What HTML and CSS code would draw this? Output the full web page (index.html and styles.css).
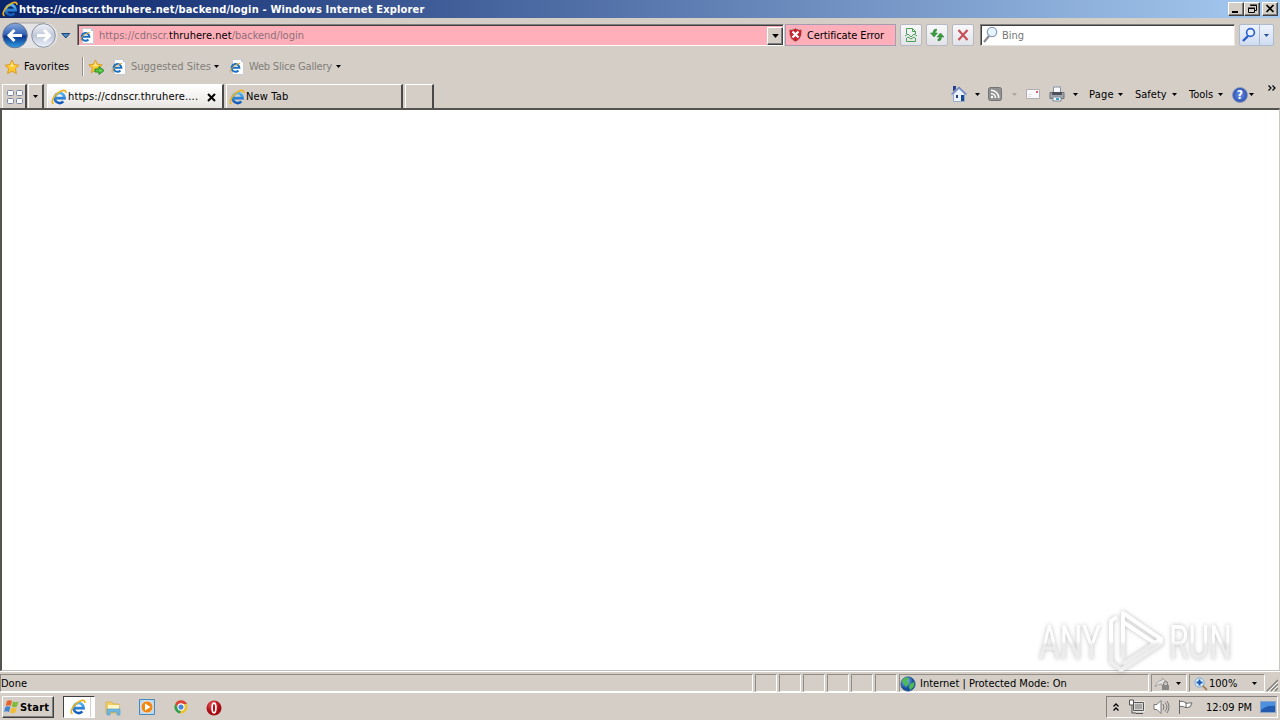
FILE: index.html
```html
<!DOCTYPE html>
<html lang="en">
<head>
    <meta charset="UTF-8">
    <meta name="viewport" content="width=device-width, initial-scale=1.0">
    <title>Windows Internet Explorer</title>
    <link rel="stylesheet" href="styles.css">
</head>
<body>
    <!-- shared icons -->
    <svg class="defs" width="0" height="0">
        <defs>
            <linearGradient id="blue" x1="0" y1="0" x2="0" y2="1"><stop offset="0" stop-color="#58b8f2"/><stop offset="1" stop-color="#1259b8"/></linearGradient>
            <linearGradient id="back" x1="0" y1="0" x2="0" y2="1"><stop offset="0" stop-color="#86a9de"/><stop offset=".48" stop-color="#2d5db2"/><stop offset=".52" stop-color="#0c3289"/><stop offset="1" stop-color="#2fa0e8"/></linearGradient>
            <linearGradient id="fwd" x1="0" y1="0" x2="0" y2="1"><stop offset="0" stop-color="#f0f2f8"/><stop offset=".5" stop-color="#bfc7d8"/><stop offset="1" stop-color="#edf3fb"/></linearGradient>
            <radialGradient id="globe" cx=".35" cy=".3"><stop offset="0" stop-color="#8fd0f8"/><stop offset="1" stop-color="#164c9c"/></radialGradient>
            <radialGradient id="opera" cx=".4" cy=".3"><stop offset="0" stop-color="#f05858"/><stop offset="1" stop-color="#a80a14"/></radialGradient>
        </defs>
        <symbol id="ie" viewBox="0 0 16 16">
            <path d="M4 9.200h9.600A5 5 0 1 0 12.300 12.400" fill="none" stroke="url(#blue)" stroke-width="2.700"/>
            <path d="M4.500 9.200H14" stroke="#2a80d4" stroke-width="1.800"/>
            <path d="M2.600 14.800C-.6 13.800 2 8 6.500 4.300 10.500 1.100 15.400 -.2 14.900 4" fill="none" stroke="#eeb21c" stroke-width="1.600"/>
        </symbol>
        <symbol id="iepage" viewBox="0 0 16 16">
            <path d="M3.500.5h9l2 2v13h-11z" fill="#fff" stroke="#c9cbd0"/>
            <path d="M12.500.5v2h2" fill="#e3e6ea" stroke="#b9bcc4"/>
            <path d="M3 8.800h7.400a3.900 3.900 0 1 0-1 2.700" fill="none" stroke="#1b70c4" stroke-width="2"/>
            <path d="M1.500 13.500C0 12 4 6 11 4.300" fill="none" stroke="#e0a82c"/>
        </symbol>
        <symbol id="star" viewBox="0 0 16 16">
            <path d="M8 1l2.100 4.600 5 .6-3.700 3.400 1 5L8 12.100l-4.400 2.500 1-5L.9 6.200l5-.6z" fill="#fcc62f" stroke="#dc9a26"/>
            <path d="M8 3l1.200 3.400 2.800.4-4 1.200-4-1.200 2.800-.4z" fill="#ffe98c"/>
        </symbol>
        <symbol id="caret" viewBox="0 0 5 3"><path d="M0 0h5L2.500 3z"/></symbol>
    </svg>

    <div class="titlebar">
        <svg class="i16"><use href="#ie"/></svg>
        <span class="title">https://cdnscr.thruhere.net/backend/login - Windows Internet Explorer</span>
        <div class="window-buttons">
            <button class="win-btn"><svg width="11" height="10"><path d="M1 8h6" stroke="#000" stroke-width="2"/></svg></button>
            <button class="win-btn"><svg width="11" height="10" fill="none" stroke="#000"><path d="M3.500 1.500h6v5h-2M3 1h7M1.500 4.500h6v4h-6zM1 4h7"/></svg></button>
            <button class="win-btn close"><svg width="11" height="10"><path d="M1.500 1l7 7m0-7l-7 7" stroke="#000" stroke-width="1.700"/></svg></button>
        </div>
    </div>

    <div class="navbar">
        <svg class="travel" width="57" height="27" viewBox="0 0 57 27">
            <path d="M13 1h31a12 12 0 0 1 0 25H13z" fill="#e5e4e5"/>
            <path d="M13 1h31" stroke="#aaa6a8"/>
            <circle cx="14" cy="13.500" r="12.300" fill="url(#back)" stroke="#6b7694"/>
            <path d="M21 13.500H8m5.500-5.500L8 13.500l5.500 5.500" fill="none" stroke="#fff" stroke-width="3"/>
            <circle cx="42.500" cy="13.500" r="11.800" fill="url(#fwd)" stroke="#8c919e"/>
            <path d="M36 13.500h12m-5-5.500l5.500 5.500-5.500 5.500" fill="none" stroke="#fff" stroke-width="3"/>
        </svg>
        <svg class="history" width="10" height="6"><path d="M.8.500h8L4.800 5z" fill="#4f87bf" stroke="#17497f"/></svg>
        <div class="address">
            <svg class="i16"><use href="#iepage"/></svg>
            <span class="url">https://cdnscr.<b>thruhere.net</b>/backend/login</span>
            <button class="drop"><svg class="caret wide"><use href="#caret"/></svg></button>
        </div>
        <div class="cert">
            <svg width="15" height="16" viewBox="0 0 15 16">
                <path d="M7.500 1C5 2.500 3 2.700 1.200 2.500.8 8 2 12.500 7.500 15c5.500-2.500 6.700-7 6.300-12.500C12 2.700 10 2.500 7.500 1z" fill="#c82430" stroke="#cdb3b6"/>
                <path d="M4.500 4.500l6 6m0-6l-6 6" stroke="#fff" stroke-width="2.200"/>
            </svg>
            <span>Certificate Error</span>
        </div>
        <button class="tool"><svg width="16" height="16" fill="none" stroke="#4c9f55"><path d="M3.500 7V1.500h6l3 3V7M3.500 11v3.500h9V11M9.500 1.500v3h3"/><path d="M2 9l3-2 3 3 3-3 3 2M3 12l2-2 3 2 3-2 2 2"/></svg></button>
        <button class="tool"><svg width="16" height="16"><path d="M7.500 2Q4 2 4 6H1.500L5 10 8.500 6H6Q6 4 7.500 4zM9 14q3.500 0 3.500-4H15l-3.500-4L8 10h2.500q0 2-1.500 2z" fill="#3c9c3d" stroke="#257b30" stroke-width=".5"/></svg></button>
        <button class="tool"><svg width="16" height="16"><path d="M3.500 3l9 10m0-10l-9 10" stroke="#c84f58" stroke-width="2.200"/></svg></button>
        <div class="search">
            <svg width="17" height="18" fill="none"><path d="M7 10l-5 6" stroke="#8e8c92" stroke-width="2.200"/><circle cx="10" cy="6" r="4.700" fill="#e7f4fe" stroke="#8b9fb9" stroke-width="1.300"/></svg>
            <span>Bing</span>
        </div>
        <div class="search-go">
            <svg class="go" width="20" height="20" fill="none"><path d="M8 11l-5 5" stroke="#2a5dc4" stroke-width="2.400"/><circle cx="10.500" cy="7.500" r="3.900" fill="#eef4ff" stroke="#2f65cc" stroke-width="1.700"/></svg>
            <svg class="caret blue"><use href="#caret"/></svg>
        </div>
    </div>

    <div class="favbar">
        <svg class="i16"><use href="#star"/></svg>
        <span class="fav-label">Favorites</span>
        <i class="fav-sep"></i>
        <svg class="add" width="17" height="16"><use href="#star" width="15" height="15"/><path d="M7 10h4V7.500l5 4-5 4V13H7z" fill="#5fcb45" stroke="#21882a"/></svg>
        <svg class="i16 s1"><use href="#iepage"/></svg>
        <span class="link suggested">Suggested Sites</span>
        <svg class="caret"><use href="#caret"/></svg>
        <svg class="i16 s2"><use href="#iepage"/></svg>
        <span class="link gallery">Web Slice Gallery</span>
        <svg class="caret"><use href="#caret"/></svg>
    </div>

    <div class="tabrow">
        <div class="quick">
            <svg width="16" height="14" fill="#fafbfd" stroke="#7885a5"><rect x=".5" y=".5" width="6" height="5" rx="1"/><rect x="9.500" y=".5" width="6" height="5" rx="1"/><rect x=".5" y="8.500" width="6" height="5" rx="1"/><rect x="9.500" y="8.500" width="6" height="5" rx="1"/></svg>
        </div>
        <div class="tab-list"><svg class="caret"><use href="#caret"/></svg></div>
        <div class="tab active">
            <svg class="i16"><use href="#ie"/></svg>
            <span>https://cdnscr.thruhere....</span>
            <svg class="tab-close" width="9" height="9"><path d="M1 1l7 7m0-7L1 8" stroke="#000" stroke-width="2"/></svg>
        </div>
        <div class="tab second">
            <svg class="i16"><use href="#ie"/></svg>
            <span>New Tab</span>
        </div>
        <div class="tab blank"></div>
        <div class="commands">
            <svg class="home" width="18" height="18"><path d="M3.500 9v7.500h11V9L9 3.500z" fill="#edf3fd" stroke="#9aabcb"/><path d="M1.500 9.500L9 2.500l7.500 7" fill="none" stroke="#6f86c4" stroke-width="1.400"/><path d="M3 1h3v3L3 6.500z" fill="#29408e"/><path d="M11 10h3v6h-3z" fill="#174a91"/><path d="M6 10h2v3H6z" fill="#263f7b"/></svg>
            <svg class="caret c1"><use href="#caret"/></svg>
            <svg class="rss" width="14" height="14"><rect x=".5" y=".5" width="13" height="13" rx="2" fill="#929292" stroke="#747474"/><path d="M3 6.500A4.500 4.500 0 0 1 7.500 11M3 3.200A7.800 7.800 0 0 1 10.800 11" fill="none" stroke="#fff" stroke-width="1.500"/><circle cx="4" cy="10" r="1.200" fill="#fff"/></svg>
            <svg class="caret c2 dim"><use href="#caret"/></svg>
            <svg class="mail" width="14" height="10"><path d="M.5.500h13v9H.5z" fill="#f9f9fb" stroke="#b1adb3"/><path d="M10 2h2v2h-2z" fill="#cc6470"/><path d="M2 5.500h4M2 7.500h3" stroke="#e2e2e4"/></svg>
            <svg class="print" width="16" height="16"><path d="M4.500 1h7v6h-7z" fill="#f7f9fc" stroke="#8991a2"/><path d="M1 6.500h14v6H1z" fill="#a3a6ad" stroke="#6d717b"/><path d="M3 6h10v3H3z" fill="#4d515b"/><path d="M4 11h8v4H4z" fill="#f5fbff" stroke="#7c8a98"/><path d="M7 12h3v2H7z" fill="#42a0c9"/></svg>
            <svg class="caret c3"><use href="#caret"/></svg>
            <span class="page">Page</span>
            <svg class="caret"><use href="#caret"/></svg>
            <span class="safety">Safety</span>
            <svg class="caret"><use href="#caret"/></svg>
            <span class="tools">Tools</span>
            <svg class="caret"><use href="#caret"/></svg>
            <span class="help">?</span>
            <svg class="caret"><use href="#caret"/></svg>
            <svg class="more" width="8" height="6" fill="none" stroke="#000" stroke-width="1.200"><path d="M.5.500L3 3 .5 5.500M4.500.500L7 3 4.500 5.500"/></svg>
        </div>
    </div>

    <div class="viewport">
        <svg class="watermark" width="200" height="66" viewBox="0 0 200 66">
            <defs>
                <linearGradient id="fade" x1="0" y1="0" x2="0" y2="66" gradientUnits="userSpaceOnUse"><stop offset=".5" stop-color="#fff"/><stop offset=".56" stop-color="#ebebeb"/><stop offset="1" stop-color="#f0f0f0"/></linearGradient>
            </defs>
            <g fill="url(#fade)" font-family="Roboto, sans-serif" font-size="49" font-weight="400">
                <text x="3" y="51" textLength="62" lengthAdjust="spacingAndGlyphs">ANY</text>
                <text x="133" y="51" textLength="63" lengthAdjust="spacingAndGlyphs">RUN</text>
            </g>
            <g fill="none" stroke="url(#fade)" stroke-width="4" stroke-linejoin="round">
                <path d="M87 49V5l38 26-38 25"/>
                <path d="M87 14l33 22"/>
                <path d="M81 9l-6 4v41l10 8 40-26v-5"/>
            </g>
        </svg>
    </div>

    <div class="statusbar">
        <div class="pane done">Done</div>
        <div class="pane small"></div>
        <div class="pane small"></div>
        <div class="pane small"></div>
        <div class="pane small"></div>
        <div class="pane small"></div>
        <div class="pane small"></div>
        <div class="pane zone">
            <svg width="16" height="16"><circle cx="8" cy="8" r="7.200" fill="url(#globe)" stroke="#2d5688" stroke-width=".7"/><path d="M2 5c2-4 6-4 7-3L7 5l2 2-3 4-2-3zM10 8l4-2c1 4-1 6-4 8l-1-3z" fill="#4dbb54"/></svg>
            <span>Internet | Protected Mode: On</span>
        </div>
        <div class="pane lock">
            <svg width="18" height="14"><path d="M1 10c1-4 3-6 7-7V1l5 4-5 4V7C5 7 3 8 1 10z" fill="#e6e5e4" stroke="#a4a2a0"/><path d="M9.500 8V6.500a2 2 0 0 1 4 0V8" fill="none" stroke="#777"/><path d="M8 8h7v5H8z" fill="#888"/></svg>
            <svg class="caret"><use href="#caret"/></svg>
        </div>
        <div class="pane zoom">
            <svg width="14" height="14"><path d="M8 8l5 5" stroke="#a3865a" stroke-width="2"/><circle cx="5.500" cy="5.500" r="4.600" fill="#e2f2ff" stroke="#7da3cb"/><path d="M5.500 2.500v6m-3-3h6" stroke="#185bb0" stroke-width="2"/></svg>
            <span>100%</span>
            <svg class="caret"><use href="#caret"/></svg>
        </div>
        <svg class="grip" width="12" height="14"><path d="M1 13L12 2M5 13l7-7M9 13l3-3" stroke="#85817c" stroke-width="1.500"/><path d="M2 14L12 4M6 14l6-6" stroke="#fff"/></svg>
    </div>

    <div class="taskbar">
        <button class="start">
            <svg width="16" height="16"><path d="M3 2c2-1.300 3.300-1 5 0L6.700 7c-2-1-3-1-5 0z" fill="#e96229"/><path d="M9 2.500c2 1 3.300 1 5.500 0L13 7.500c-2 1-3.300 1-5.200 0z" fill="#7fbb38"/><path d="M1.400 8c2-1 3-1 5 0L5 13c-2-1-3.200-1-5 0z" fill="#3f83d2"/><path d="M7.500 8.500c2 1 3.200 1 5.200 0l-1.500 5c-2 1-3.200 1-5 0z" fill="#f5bd2e"/></svg>
            <b>Start</b>
        </button>
        <div class="running"><svg class="i16"><use href="#ie"/></svg></div>
        <svg class="folder" width="16" height="16"><path d="M1 2h6l1 2h6v9H1z" fill="#f0cf68" stroke="#d8b554"/><path d="M3 5h11v4H3z" fill="#fff6c6"/><path d="M2 9h13v6h-3v-3H5v3H2z" fill="#73b8df" stroke="#4d98c9" stroke-width=".6"/></svg>
        <svg class="media" width="16" height="16"><path d="M.5.500h15v15H.5z" fill="#b9d8f1" stroke="#4988be"/><circle cx="8" cy="8" r="6" fill="#ef8816" stroke="#fff" stroke-width=".6"/><path d="M6 4.500v7L11.500 8z" fill="#fff"/></svg>
        <svg class="chrome" width="14" height="14"><circle cx="7" cy="7" r="6.500" fill="#f0c12e"/><path d="M1.300 3.700A6.600 6.600 0 0 1 13 4H7L4 8z" fill="#dc4437"/><path d="M1.300 3.700L4.500 9 7 10l-1 3.500A6.600 6.600 0 0 1 1.300 3.700z" fill="#2c9e55"/><circle cx="7" cy="7" r="3.100" fill="#4a85dd" stroke="#fff" stroke-width="1.100"/></svg>
        <svg class="opera" width="16" height="16"><circle cx="8" cy="8" r="7.500" fill="url(#opera)"/><ellipse cx="8" cy="8" rx="1.900" ry="4.800" fill="#b40d18" stroke="#fff" stroke-width="1.700"/></svg>
        <div class="tray">
            <svg class="up" width="6" height="9" fill="none" stroke="#000" stroke-width="1.300"><path d="M.5 3.500L3 1l2.500 2.500M.5 7.500L3 5l2.500 2.500"/></svg>
            <svg class="net" width="16" height="16"><path d="M4.500 3.500h10v8h-10z" fill="#a7a6a4" stroke="#fff" stroke-width="2"/><path d="M4.500 3.500h10v8h-10zM7 14.500h7M3 6v8h4" fill="none" stroke="#555"/><path d="M.5 1h4v5h-4z" fill="#fff" stroke="#555"/></svg>
            <svg class="sound" width="17" height="16" fill="none" stroke="#777"><path d="M1 5.500h3l4-4v13l-4-4H1z" fill="#fff"/><path d="M10 5q2 3 0 6M12 3.500q4 4.500 0 9M14 2q4 6 0 12"/></svg>
            <svg class="flag" width="16" height="16"><path d="M2.500 1v14M3 2.500c3-1 4 1 6 1v5c-2 0-3-2-6-1M9 4.500c2 0 3-1 6-.5l-2 4c-2 0-2 1-4 .5" fill="#fff" stroke="#666"/></svg>
            <span>12:09 PM</span>
            <svg class="desk" width="16" height="13"><path d="M.5.500h15v11H.5z" fill="#235cae" stroke="#8ba4c6"/><path d="M1 1h14v4Q7 4 1 9z" fill="#4b91df"/></svg>
        </div>
    </div>
</body>
</html>
```
FILE: styles.css
```css
* {
    box-sizing: border-box;
}
body {
    margin: 0;
    width: 1280px;
    height: 720px;
    overflow: hidden;
    background: #d4cec7;
    color: #000;
    font-family: "DejaVu Sans Condensed", "DejaVu Sans", sans-serif;
    font-size: 11px;
    line-height: 14px;
    white-space: nowrap;
    display: flex;
    flex-direction: column;
}
body > div {
    display: flex;
    flex-shrink: 0;
}
svg, button, i {
    flex-shrink: 0;
}
button {
    padding: 0;
    font: inherit;
}
.defs {
    position: absolute;
}
.i16 {
    width: 16px;
    height: 16px;
}
.caret {
    width: 5px;
    height: 3px;
}

/* title bar */
.titlebar {
    height: 18px;
    padding-left: 2px;
    align-items: center;
    background: linear-gradient(90deg, #0a246a, #a6caf0);
}
.title {
    margin-left: 1px;
    padding-top: 1px;
    color: #fff;
    font-weight: bold;
    letter-spacing: 0.18px;
}
.window-buttons {
    display: flex;
    margin-left: auto;
    padding-right: 2px;
}
.win-btn {
    width: 16px;
    height: 14px;
    display: flex;
    justify-content: center;
    align-items: center;
    background: #d4cec7;
    border: 1px solid;
    border-color: #fff #404040 #404040 #fff;
    box-shadow: inset -1px -1px #808080;
}
.close {
    margin-left: 2px;
}

/* address row */
.navbar {
    height: 33px;
    padding: 6px 0 0 1px;
    align-items: flex-start;
}
.travel {
    margin-top: -2px;
}
.history {
    margin: 9px 6px 0 3px;
}
.address {
    width: 707px;
    height: 22px;
    display: flex;
    align-items: center;
    padding: 1px 0 0 1px;
    background: #ffafb9;
    border: 1px solid;
    border-color: #808080 #fff #fff #808080;
    box-shadow: inset 1px 1px #404040;
}
.url {
    margin-left: 4px;
    padding-top: 1px;
    color: #8b7078;
    letter-spacing: -0.02px;
}
.url b {
    font-weight: normal;
    color: #000;
    letter-spacing: 0.04px;
}
.drop {
    width: 16px;
    height: 18px;
    margin-left: auto;
    display: flex;
    align-items: center;
    justify-content: center;
    background: #d4cec7;
    border: 1px solid;
    border-color: #fff #404040 #404040 #fff;
    box-shadow: inset -1px -1px #808080;
}
.wide {
    width: 7px;
    height: 4px;
}
.cert {
    width: 111px;
    height: 22px;
    margin: 0 4px 0 1px;
    display: flex;
    align-items: center;
    padding-left: 2px;
    background: #ffafb9;
    border: 1px solid #a59bb4;
}
.cert span {
    margin-left: 4px;
    padding-top: 2px;
    letter-spacing: -0.1px;
}
.tool {
    width: 22px;
    height: 22px;
    margin-right: 4px;
    display: flex;
    align-items: center;
    justify-content: center;
    background: linear-gradient(#f8f8fa, #e2e3e8);
    border: 1px solid #b6b8c2;
    border-radius: 2px;
}
.search {
    width: 255px;
    height: 22px;
    margin-left: 2px;
    display: flex;
    align-items: center;
    padding-left: 1px;
    background: #fff;
    border: 1px solid;
    border-color: #808080 #e8e4df #e8e4df #808080;
    box-shadow: inset 1px 1px #404040;
}
.search span {
    margin-left: 3px;
    padding-top: 2px;
    color: #777;
}
.search-go {
    width: 35px;
    height: 22px;
    margin-left: 4px;
    display: flex;
    align-items: center;
    background: linear-gradient(#eef3fc, #cfdcf1);
    border: 1px solid #adb9cd;
    border-radius: 2px;
}
.go {
    height: 20px;
    margin-right: 4px;
    border-right: 1px solid #adb9cd;
}
.blue {
    fill: #24539b;
}

/* favorites row */
.favbar {
    height: 31px;
    padding-left: 4px;
    align-items: center;
}
.fav-label {
    width: 47px;
    margin-left: 4px;
    letter-spacing: 0.08px;
}
.fav-sep {
    width: 2px;
    height: 19px;
    margin: 0 5px 0 11px;
    border-left: 1px solid #929088;
    border-right: 1px solid #f8f6f2;
}
.add {
    margin-left: -1px;
}
.s1 {
    margin-left: 6px;
}
.link {
    margin-left: 4px;
    padding-top: 1px;
    color: #817e7a;
}
.suggested {
    width: 83px;
}
.gallery {
    width: 87px;
    letter-spacing: -0.2px;
}
.s2 {
    margin-left: 10px;
}

/* tabs and command bar */
.tabrow {
    height: 26px;
    padding: 2px 0 0 2px;
    align-items: flex-start;
}
.quick, .tab-list, .tab {
    height: 24px;
    display: flex;
    align-items: center;
    border-top: 1px solid #fff;
    border-left: 1px solid #fff;
    border-right: 2px solid #494949;
}
.quick {
    width: 25px;
    padding-left: 4px;
}
.tab-list {
    width: 16px;
    margin-left: 1px;
    justify-content: center;
}
.tab {
    padding-left: 2px;
}
.tab span {
    margin-left: 1px;
}
.active {
    width: 177px;
    margin-left: 3px;
    background: linear-gradient(#fff, #e8e5e1);
}
.active span {
    letter-spacing: 0.17px;
}
.active svg:first-child {
    margin-left: 1px;
}
.tab-close {
    margin: 1px 6px 0 auto;
}
.second {
    width: 177px;
    margin-left: 2px;
}
.second span {
    padding-top: 1px;
    letter-spacing: 0.15px;
}
.blank {
    width: 29px;
    margin-left: 2px;
}
.commands {
    height: 20px;
    margin: 0 4px 0 auto;
    display: flex;
    align-items: center;
}
.commands span {
    margin-top: 1px;
}
.c1 {
    margin: 0 8px 0 7px;
}
.c2 {
    margin: 0 9px 0 10px;
}
.c3 {
    margin: 0 11px 0 8px;
}
.dim {
    fill: #aaa59f;
}
.print {
    margin-left: 9px;
}
.page {
    width: 29px;
    letter-spacing: 0.2px;
}
.safety {
    width: 37px;
    margin-left: 12px;
}
.tools {
    width: 29px;
    margin-left: 12px;
}
.help {
    width: 16px;
    height: 16px;
    margin: 0 1px 0 9px;
    border: 1px solid #8a97b8;
    border-radius: 8px;
    background: radial-gradient(#6b94eb, #163c9e);
    color: #fff;
    font-size: 12px;
    font-weight: bold;
    text-align: center;
}
.more {
    margin: -12px 0 0 14px;
}

/* page area */
.viewport {
    height: 563px;
    position: relative;
    background: #fff;
    border: 1px solid #c9c5bf;
    border-top: 2px solid #55534f;
    border-left: 2px solid #55534f;
    border-bottom-color: #c4c0bb;
}
.watermark {
    position: absolute;
    right: 43px;
    bottom: -4px;
    overflow: visible;
    filter: drop-shadow(0 0 2px rgba(0, 0, 0, 0.26));
}

/* status bar */
.statusbar {
    height: 22px;
    padding-top: 3px;
    border-bottom: 1px solid #fff;
    box-shadow: inset 0 1px #fff;
}
.pane {
    height: 18px;
    display: flex;
    align-items: center;
    margin-right: 2px;
    padding-top: 1px;
    border: 1px solid;
    border-color: #908c86 #fff #fff #908c86;
}
.done {
    width: 753px;
}
.small {
    width: 22px;
}
.zone {
    width: 250px;
}
.zone span {
    margin-left: 4px;
}
.lock {
    width: 36px;
    padding-left: 2px;
}
.lock .caret {
    margin-left: 4px;
}
.zoom {
    width: 76px;
    padding-left: 4px;
}
.zoom span {
    width: 43px;
    margin-left: 1px;
}
.grip {
    margin: 4px 0 0 -1px;
}

/* taskbar */
.taskbar {
    height: 27px;
    padding: 3px 0 0 2px;
    align-items: flex-start;
}
.start {
    width: 52px;
    height: 22px;
    display: flex;
    align-items: center;
    background: #d4cec7;
    border: 1px solid;
    border-color: #fff #404040 #404040 #fff;
    box-shadow: inset -1px -1px #808080;
}
.start svg {
    margin-left: 1px;
}
.start b {
    padding-top: 1px;
    letter-spacing: 0.2px;
}
.running {
    width: 32px;
    height: 22px;
    margin-left: 9px;
    display: flex;
    align-items: center;
    padding-left: 6px;
    background: #fff;
    border: 1px solid;
    border-color: #404040 #fff #fff #404040;
    box-shadow: inset -3px 0 #fff, inset -4px 0 #d4cec7;
}
.folder {
    margin: 4px 0 0 10px;
}
.media {
    margin: 3px 0 0 18px;
}
.chrome {
    margin: 4px 0 0 19px;
}
.opera {
    margin: 4px 0 0 18px;
}
.tray {
    width: 172px;
    height: 22px;
    margin: 0 2px 0 auto;
    display: flex;
    align-items: center;
    padding-left: 6px;
    border: 1px solid;
    border-color: #87827d #fff #fff #87827d;
}
.net {
    margin-left: 10px;
}
.sound {
    margin-left: 8px;
}
.flag {
    margin-left: 7px;
}
.tray span {
    width: 46px;
    margin-left: 13px;
    padding-top: 1px;
}
.desk {
    margin-left: 8px;
}
```
